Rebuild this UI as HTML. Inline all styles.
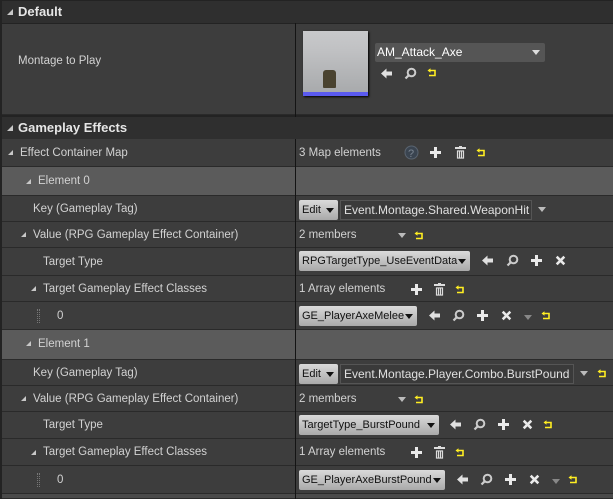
<!DOCTYPE html><html><head><style>
*{margin:0;padding:0;box-sizing:border-box}
body{width:613px;height:499px;background:#232323;font-family:"Liberation Sans",sans-serif;font-size:11.5px;color:#d2d2d2;position:relative;overflow:hidden}
.a{position:absolute}
.hdr{position:absolute;left:2px;right:0;background:#2f2f2f;font-weight:bold;font-size:13px;color:#e6e6e6;padding-left:16px;line-height:22px;z-index:2}
.hdr:before,.tri:before{content:"";position:absolute;border-left:6px solid transparent;border-bottom:6px solid #c8c8c8}
.hdr:before{left:5px;top:8px}
.row{position:absolute;left:2px;right:0;background:#3d3d3d;border-bottom:1px solid #2a2a2a}
.row.el{background:#5b5b5b}
.lbl{position:absolute;top:0;line-height:inherit}
.tri:before{left:-12px;top:50%;margin-top:-3px;border-left-width:5px;border-bottom-width:5px}
.div{position:absolute;left:295px;top:23px;bottom:0;width:1px;background:#141414;z-index:1}
.btn{position:absolute;height:20px;background:linear-gradient(#dadada,#a9a9a9);color:#111;border-radius:2px;padding-left:3px;line-height:20px;font-size:11px;z-index:3}
.btn:after{content:"";position:absolute;right:4px;top:8px;border:4px solid transparent;border-top:5px solid #111;border-bottom:0}
.txt{position:absolute;height:20px;border:1px solid #555;background:#3a3a3a;color:#e0e0e0;line-height:18px;padding-left:3px;font-size:12px;z-index:3}
.dd{position:absolute;border:4px solid transparent;border-top:5px solid #bbb;border-bottom:0;z-index:3}
.a,svg{z-index:3}
</style></head><body>
<svg width="0" height="0" style="position:absolute">
<defs>
<symbol id="bk" viewBox="0 0 13 13"><path d="M1 6.5 L6.5 1.5 V4.5 H12 V8.5 H6.5 V11.5 Z" fill="#e0e0e0"/></symbol>
<symbol id="mg" viewBox="0 0 13 13"><circle cx="7.5" cy="5.5" r="3.8" stroke="#ccc" stroke-width="2" fill="none"/><line x1="4.8" y1="8.2" x2="1.5" y2="11.5" stroke="#ccc" stroke-width="2.2"/></symbol>
<symbol id="pl" viewBox="0 0 13 13"><path d="M5 1h3v4h4v3H8v4H5V8H1V5h4z" fill="#eaeaea"/></symbol>
<symbol id="x" viewBox="0 0 13 13"><path d="M2 2L11 11M11 2L2 11" stroke="#eaeaea" stroke-width="3"/></symbol>
<symbol id="tr" viewBox="0 0 11 13"><rect x="0" y="1" width="11" height="2" fill="#ddd"/><rect x="4" y="0" width="3" height="1" fill="#ddd"/><path d="M1.5 4h8v9h-8z M3.5 5.5v6M5.5 5.5v6M7.5 5.5v6" fill="#ddd" stroke="#3d3d3d" stroke-width="0.8"/></symbol>
<symbol id="rs" viewBox="0 0 10 10"><path d="M3 2.5H8V7.5H2" stroke="#ffee22" stroke-width="1.6" fill="none"/><path d="M0.5 2.5L3.5 0.3V4.7Z" fill="#ffee22"/></symbol>
</defs></svg>
<div class="hdr" style="top:1px;height:22px">Default</div>
<div class="row" style="top:24px;height:91px"><span class="lbl" style="left:16px;top:31px">Montage to Play</span></div>
<div class="a" style="left:303px;top:31px;width:65px;height:65px;background:linear-gradient(#c8c9cb 0%,#c0c1c3 30%,#a6a8aa 100%);box-shadow:1px 1px 2px #000"></div>
<div class="a" style="left:303px;top:92px;width:65px;height:4px;background:#5a5af0"></div>
<div class="a" style="left:323px;top:70px;width:13px;height:18px;background:#4a4330;border-radius:3px 3px 1px 1px"></div>
<div class="a" style="left:375px;top:43px;width:170px;height:19px;background:#555;border-radius:2px;color:#fff;font-size:12px;line-height:19px;padding-left:2px">AM_Attack_Axe</div>
<div class="dd" style="left:532px;top:50px;border-top-color:#ddd"></div>
<svg class="a" style="left:380px;top:67px" width="13" height="13"><use href="#bk"/></svg>
<svg class="a" style="left:404px;top:67px" width="13" height="13"><use href="#mg"/></svg>
<svg class="a" style="left:427px;top:68px" width="10" height="10"><use href="#rs"/></svg>
<div class="hdr" style="top:117px;height:22px">Gameplay Effects</div>
<div class="row" style="top:139px;height:28px;line-height:28px"><span class="lbl tri" style="left:18px">Effect Container Map</span><span class="lbl" style="left:297px">3 Map elements</span></div>
<svg class="a" style="left:404px;top:145px" width="15" height="15"><circle cx="7.5" cy="7.5" r="6.5" fill="#3a4450" stroke="#5a6470"/><text x="4" y="12" font-size="11" fill="#7a8490" font-family="Liberation Sans">?</text></svg>
<svg class="a" style="left:429px;top:146px" width="13" height="13"><use href="#pl"/></svg>
<svg class="a" style="left:455px;top:146px" width="11" height="13"><use href="#tr"/></svg>
<svg class="a" style="left:476px;top:148px" width="10" height="10"><use href="#rs"/></svg>
<div class="row el" style="top:167px;height:29px;line-height:29px"><span class="lbl tri" style="left:36px">Element 0</span></div>
<div class="row" style="top:196px;height:26px;line-height:26px"><span class="lbl" style="left:31px">Key (Gameplay Tag)</span></div>
<div class="row" style="top:222px;height:26px;line-height:26px"><span class="lbl tri" style="left:31px">Value (RPG Gameplay Effect Container)</span><span class="lbl" style="left:297px">2 members</span></div>
<div class="row" style="top:248px;height:28px;line-height:28px"><span class="lbl" style="left:41px">Target Type</span></div>
<div class="row" style="top:276px;height:26px;line-height:26px"><span class="lbl tri" style="left:41px">Target Gameplay Effect Classes</span><span class="lbl" style="left:297px">1 Array elements</span></div>
<div class="row" style="top:302px;height:28px;line-height:28px"><span class="lbl" style="left:55px">0</span></div>
<div class="a" style="left:37px;top:309px;width:3px;height:14px;border-left:1px dotted #777;border-right:1px dotted #777"></div>
<div class="row el" style="top:330px;height:30px;line-height:28px"><span class="lbl tri" style="left:36px">Element 1</span></div>
<div class="row" style="top:360px;height:26px;line-height:26px"><span class="lbl" style="left:31px">Key (Gameplay Tag)</span></div>
<div class="row" style="top:386px;height:26px;line-height:26px"><span class="lbl tri" style="left:31px">Value (RPG Gameplay Effect Container)</span><span class="lbl" style="left:297px">2 members</span></div>
<div class="row" style="top:412px;height:27px;line-height:27px"><span class="lbl" style="left:41px">Target Type</span></div>
<div class="row" style="top:439px;height:27px;line-height:27px"><span class="lbl tri" style="left:41px">Target Gameplay Effect Classes</span><span class="lbl" style="left:297px">1 Array elements</span></div>
<div class="row" style="top:466px;height:28px;line-height:28px"><span class="lbl" style="left:55px">0</span></div>
<div class="a" style="left:37px;top:473px;width:3px;height:14px;border-left:1px dotted #777;border-right:1px dotted #777"></div>
<div class="row" style="top:494px;height:5px;background:#4a4a4a"></div>
<div class="div"></div>
<div class="btn" style="left:299px;top:200px;width:39px">Edit</div>
<div class="txt" style="left:340px;top:200px;width:192px">Event.Montage.Shared.WeaponHit</div>
<div class="dd" style="left:538px;top:207px"></div>
<div class="dd" style="left:398px;top:233px"></div><svg class="a" style="left:414px;top:231px" width="10" height="10"><use href="#rs"/></svg>
<div class="btn" style="left:299px;top:251px;width:171px">RPGTargetType_UseEventData</div>
<svg class="a" style="left:481px;top:254px" width="13" height="13"><use href="#bk"/></svg>
<svg class="a" style="left:506px;top:254px" width="13" height="13"><use href="#mg"/></svg>
<svg class="a" style="left:530px;top:254px" width="13" height="13"><use href="#pl"/></svg>
<svg class="a" style="left:555px;top:255px" width="11" height="11"><use href="#x"/></svg>
<svg class="a" style="left:410px;top:283px" width="13" height="13"><use href="#pl"/></svg>
<svg class="a" style="left:434px;top:283px" width="11" height="13"><use href="#tr"/></svg>
<svg class="a" style="left:455px;top:285px" width="10" height="10"><use href="#rs"/></svg>
<div class="btn" style="left:299px;top:306px;width:118px">GE_PlayerAxeMelee</div>
<svg class="a" style="left:428px;top:309px" width="13" height="13"><use href="#bk"/></svg>
<svg class="a" style="left:452px;top:309px" width="13" height="13"><use href="#mg"/></svg>
<svg class="a" style="left:476px;top:309px" width="13" height="13"><use href="#pl"/></svg>
<svg class="a" style="left:501px;top:310px" width="11" height="11"><use href="#x"/></svg>
<div class="dd" style="left:524px;top:315px;border-top-color:#888"></div><svg class="a" style="left:541px;top:311px" width="10" height="10"><use href="#rs"/></svg>
<div class="btn" style="left:299px;top:364px;width:39px">Edit</div>
<div class="txt" style="left:340px;top:364px;width:234px">Event.Montage.Player.Combo.BurstPound</div>
<div class="dd" style="left:580px;top:371px"></div><svg class="a" style="left:597px;top:369px" width="10" height="10"><use href="#rs"/></svg>
<div class="dd" style="left:398px;top:397px"></div><svg class="a" style="left:414px;top:395px" width="10" height="10"><use href="#rs"/></svg>
<div class="btn" style="left:299px;top:415px;width:140px">TargetType_BurstPound</div>
<svg class="a" style="left:449px;top:418px" width="13" height="13"><use href="#bk"/></svg>
<svg class="a" style="left:473px;top:418px" width="13" height="13"><use href="#mg"/></svg>
<svg class="a" style="left:497px;top:418px" width="13" height="13"><use href="#pl"/></svg>
<svg class="a" style="left:522px;top:419px" width="11" height="11"><use href="#x"/></svg>
<svg class="a" style="left:543px;top:420px" width="10" height="10"><use href="#rs"/></svg>
<svg class="a" style="left:410px;top:446px" width="13" height="13"><use href="#pl"/></svg>
<svg class="a" style="left:434px;top:446px" width="11" height="13"><use href="#tr"/></svg>
<svg class="a" style="left:455px;top:448px" width="10" height="10"><use href="#rs"/></svg>
<div class="btn" style="left:299px;top:470px;width:146px">GE_PlayerAxeBurstPound</div>
<svg class="a" style="left:456px;top:473px" width="13" height="13"><use href="#bk"/></svg>
<svg class="a" style="left:480px;top:473px" width="13" height="13"><use href="#mg"/></svg>
<svg class="a" style="left:504px;top:473px" width="13" height="13"><use href="#pl"/></svg>
<svg class="a" style="left:529px;top:474px" width="11" height="11"><use href="#x"/></svg>
<div class="dd" style="left:552px;top:479px;border-top-color:#888"></div><svg class="a" style="left:568px;top:475px" width="10" height="10"><use href="#rs"/></svg>
</body></html>
